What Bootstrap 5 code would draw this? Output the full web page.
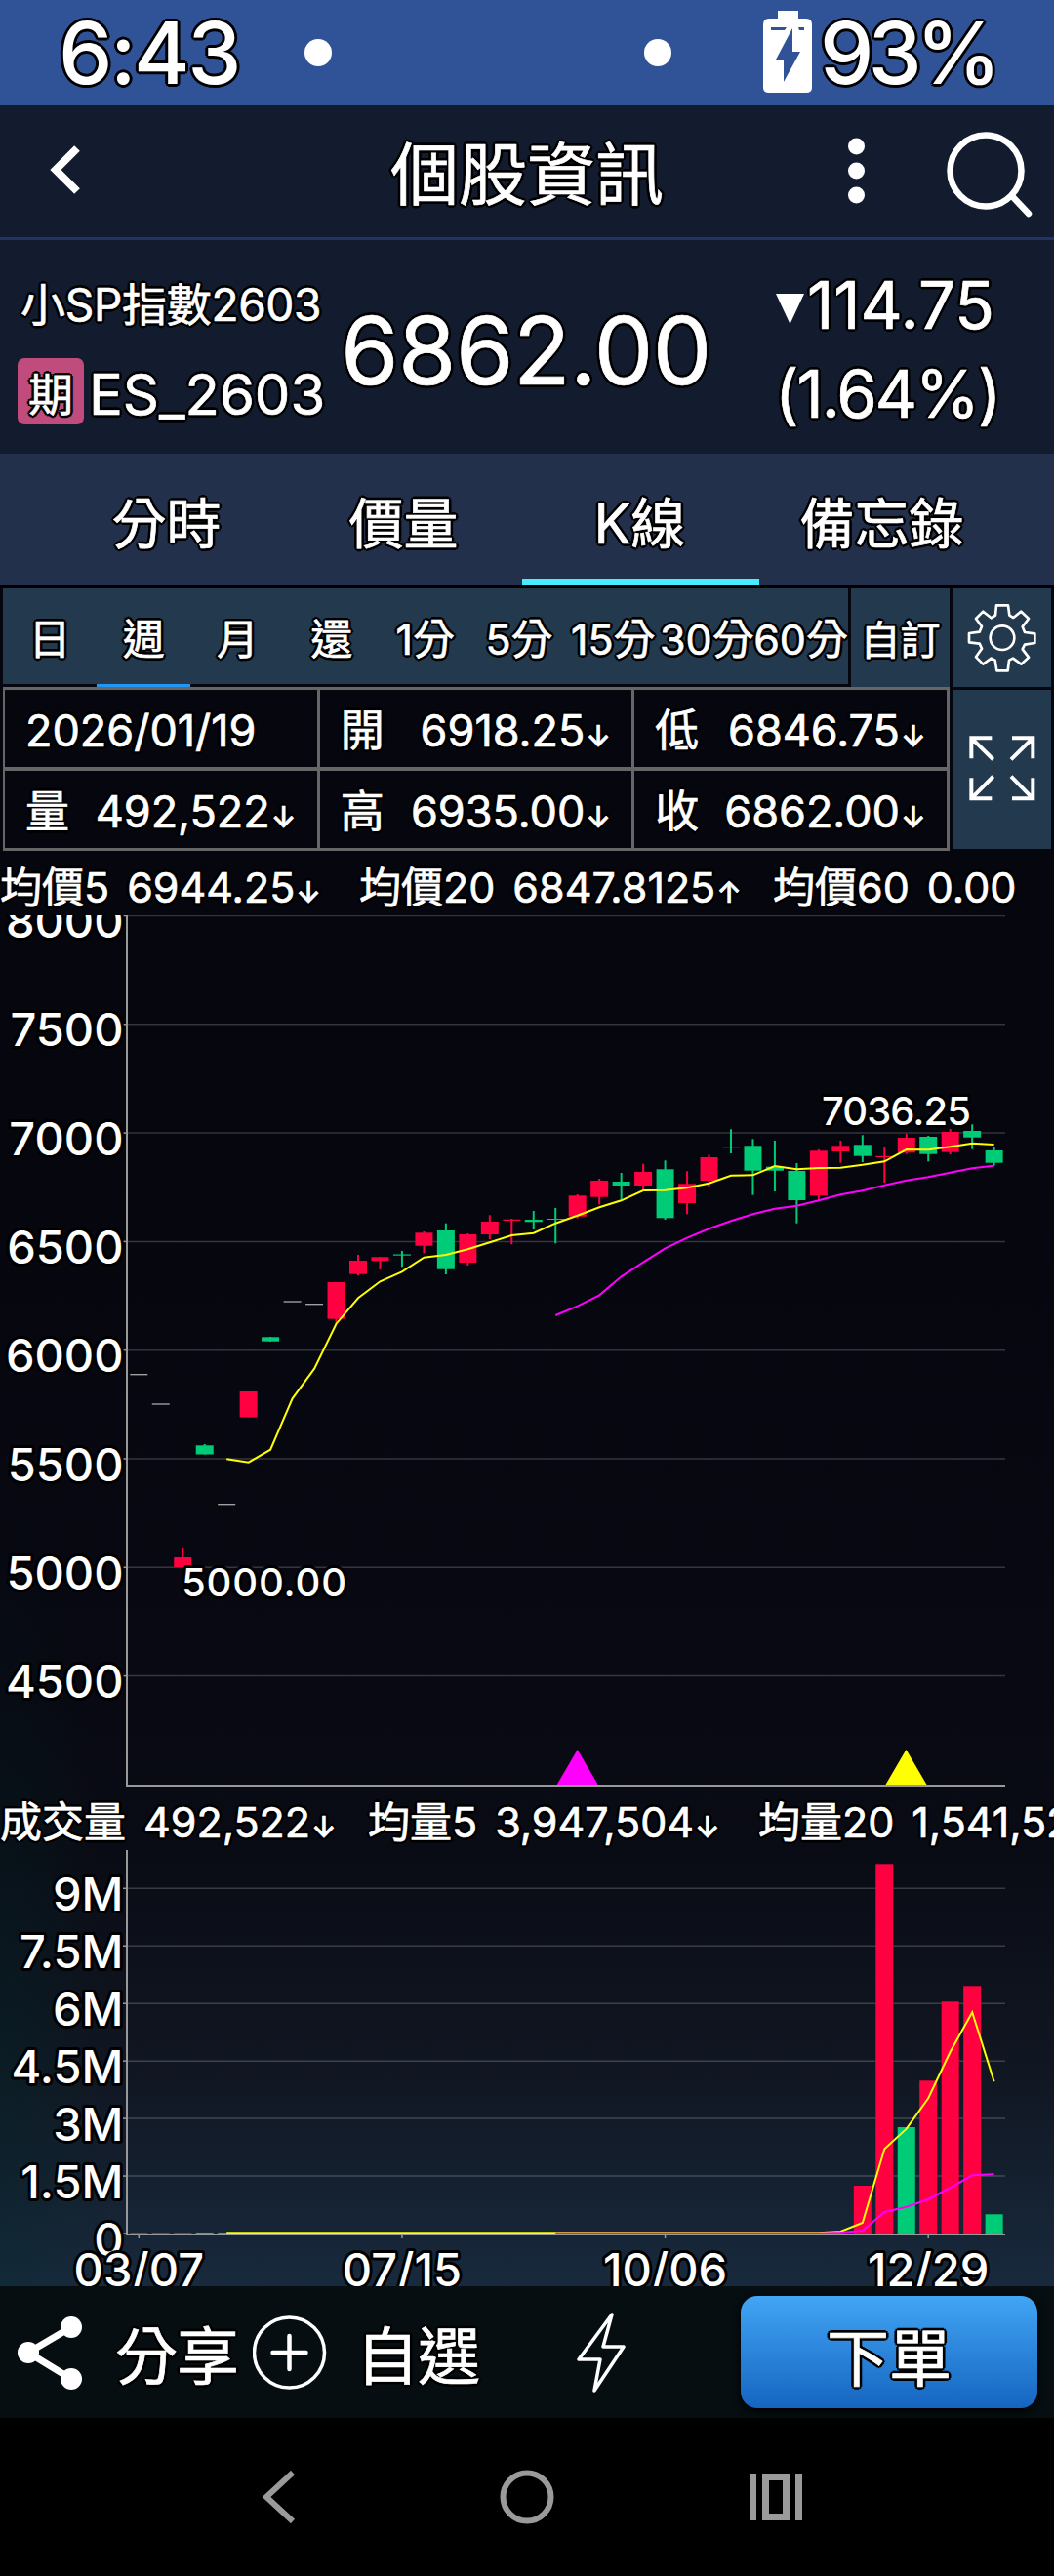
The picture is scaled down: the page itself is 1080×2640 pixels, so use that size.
<!DOCTYPE html>
<html lang="zh-Hant">
<head>
<meta charset="utf-8">
<meta name="viewport" content="width=device-width, initial-scale=1">
<title>個股資訊</title>
<link href="https://cdn.jsdelivr.net/npm/bootstrap@5.3.0/dist/css/bootstrap.min.css" rel="stylesheet">
<style>
  html, body { margin: 0; background: #000; }
  body { width: 1080px; height: 2640px; overflow: hidden; color: #fff; font-family: "Inter", "Noto Sans CJK TC", sans-serif; line-height: 1; }
  .ink { text-shadow: 3px 0 #000, -3px 0 #000, 0 3px #000, 0 -3px #000, 2px 2px #000, -2px 2px #000, 2px -2px #000, -2px -2px #000; -webkit-text-stroke: .7px #fff; white-space: nowrap; line-height: 1; }
  .ink span { display: inline-block; white-space: nowrap; }
  svg { display: block; flex: none; }
  svg text { fill: #fff; stroke: #000; stroke-width: 6px; stroke-linejoin: round; paint-order: stroke fill; font-size: 47px; font-weight: 500; -webkit-text-stroke: 0; }
  .status-bar { height: 108px; background: #305398; padding: 0 60px 0 60px; font-weight: 500; font-size: 88px; -webkit-text-stroke: 0; }
  .title-bar { height: 138px; background: #121c2e; border-bottom: 3px solid #22336a; font-size: 70px; }
  .title-bar > span { padding-top: 9px; }
  .bar-left { left: 50px; top: 40px; }
  .bar-right { left: 868px; top: 26px; }
  .quote-bar { height: 219px; background: #121c2e; }
  .kind-tag { width: 68px; height: 68px; background: #bf4c7c; border-radius: 7px; font-size: 46px; padding-top: 5px; margin-right: 5px; }
  .quote-left { width: 350px; padding: 42px 0 0 18px; }
  .quote-name { font-size: 46px; height: 79px; padding: 1px 0 0 3px; letter-spacing: -.3px; }
  .quote-code { font-size: 58px; padding-top: 6px; }
  .quote-price { font-size: 96px; width: 438px; letter-spacing: -.5px; padding-top: 6px; margin-left: -1px; }
  .quote-diff { font-size: 67px; padding-top: 4px; }
  .quote-diff svg { margin-top: 9px; }
  .quote-pct { padding-left: 7px; letter-spacing: -2px; }
  .tab-strip { height: 135px; background: #22304b; padding: 0 48px 0 49px; font-size: 56px; margin-bottom: 3px; }
  .tab-strip .nav-link { width: 243px; height: 135px; color: #fff; padding: 15px 0 0; border-bottom: 7px solid transparent; border-radius: 0; }
  .tab-strip .nav-link:last-child { width: 254px; padding-right: 3px; }
  .tab-strip .nav-link.active { border-bottom-color: #47ecff; padding-right: 2px; }
  .app-body { height: 1740px; background: radial-gradient(ellipse 110px 600px at 0 88%, rgba(0,40,42,.35), transparent), linear-gradient(#05060e 0, #05060e 35%, #080912 66%, #0a0c15 75%, #111723 88%, #182a3d 100%); }
  .tool-block { height: 269px; padding-left: 3px; gap: 3px; }
  .panel-cell { background: #23394d; }
  .periods { width: 866px; height: 98px; font-size: 43px; }
  .periods > div { width: 96.2px; height: 101px; border-bottom: 3px solid transparent; padding-top: 7px; }
  .periods > div.on { border-color: #2196f3; }
  .custom-cell { width: 101px; font-size: 41px; padding-top: 6px; }
  .side-tools { width: 101px; }
  .ohlc { width: 970px; height: 168px; font-size: 45px; border: 1px solid #666; }
  .ohlc > div { border: 2px solid #666; border-width: 2px 2px 2px 1px; width: 33.333%; height: 50%; padding: 3px 23px 0 21px; }
  .trend { font-size: 30px; font-weight: 500; width: 24px; margin-left: 1px; text-align: center; }
  .legend-row { font-size: 43px; overflow: hidden; }
  .legend-row > div { flex: none; }
  .legend-row .k { margin-right: 18px; }
  .price-legend { height: 66px; padding-top: 16px; }
  .volume-legend { height: 64px; padding-top: 14px; }
  .action-bar { height: 135px; background: #060e11; font-size: 64px; padding: 0 17px 0 18px; }
  .action-bar > span { padding-top: 8px; }
  .order-btn { width: 304px; height: 115px; border-radius: 17px; border: 0; background: linear-gradient(#42a5f5, #1565c0); box-shadow: 0 3px 8px #000; font-size: 64px; color: #fff; padding-top: 14px; }
  .sys-nav { height: 162px; background: #000; padding: 0 258px 0 268px; }
</style>
</head>
<body>
<header>
  <div class="status-bar d-flex align-items-center ink">
    <span style="width:252px;letter-spacing:-2.500px">6:43</span>
    <svg width="376" height="28"><circle cx="14" cy="14" r="14" fill="#fff"/><circle cx="362" cy="14" r="14" fill="#fff"/></svg>
    <svg class="ms-auto me-2" width="50" height="86" viewBox="0 0 50 86"><path fill="#fff" d="M15 0h21v8h8q6 0 6 6v65q0 5-6 5H6q-6 0-6-5V14q0-6 6-6h9z"/><path fill="#305398" d="M8 17h16l-2 3H8zM36 17h6v3h-5zM30 18 13 50h8v23l17-31h-8z"/></svg>
    <span style="letter-spacing:-6px">93%</span>
  </div>
  <div class="title-bar d-flex align-items-center ink position-relative justify-content-center">
    <svg class="position-absolute bar-left" width="36" height="56"><path d="M29 4 7 26l22 22" fill="none" stroke="#fff" stroke-width="8"/></svg>
    <span>個股資訊</span>
    <svg class="position-absolute bar-right" width="200" height="95"><g fill="#fff"><circle cx="9.500" cy="16" r="8.500"/><circle cx="9.500" cy="41" r="8.500"/><circle cx="9.500" cy="66" r="8.500"/></g><circle cx="142" cy="41" r="36.500" fill="none" stroke="#fff" stroke-width="6.500"/><path d="m169 67 17 18" stroke="#fff" stroke-width="6.500" stroke-linecap="round"/></svg>
  </div>
  <div class="quote-bar d-flex">
    <div class="quote-left d-flex flex-column">
      <div class="ink quote-name">小SP指數2603</div>
      <div class="d-flex align-items-center">
        <div class="kind-tag ink d-flex align-items-center justify-content-center">期</div>
        <div class="ink quote-code">ES_2603</div>
      </div>
    </div>
    <div class="ink quote-price d-flex align-items-center">6862.00</div>
    <div class="ink quote-diff d-flex flex-column justify-content-center gap-4">
      <div class="d-flex align-items-center ps-1"><svg width="36" height="34"><path d="M4 1h29L18.500 32z" fill="#fff"/></svg><span>114.75</span></div>
      <div class="quote-pct">(1.64%)</div>
    </div>
  </div>
</header>
<nav class="tab-strip nav ink flex-nowrap">
  <a class="nav-link d-flex align-items-center justify-content-center">分時</a>
  <a class="nav-link d-flex align-items-center justify-content-center">價量</a>
  <a class="nav-link active d-flex align-items-center justify-content-center">K線</a>
  <a class="nav-link d-flex align-items-center justify-content-center">備忘錄</a>
</nav>
<main class="app-body">
  <div class="tool-block d-flex">
    <div>
      <div class="d-flex" style="gap:3px;height:101px">
        <div class="periods panel-cell d-flex ink">
          <div class="d-flex align-items-center justify-content-center">日</div>
          <div class="on d-flex align-items-center justify-content-center">週</div>
          <div class="d-flex align-items-center justify-content-center">月</div>
          <div class="d-flex align-items-center justify-content-center">還</div>
          <div class="d-flex align-items-center justify-content-center">1分</div>
          <div class="d-flex align-items-center justify-content-center">5分</div>
          <div class="d-flex align-items-center justify-content-center">15分</div>
          <div class="d-flex align-items-center justify-content-center">30分</div>
          <div class="d-flex align-items-center justify-content-center">60分</div>
        </div>
        <div class="panel-cell custom-cell ink d-flex align-items-center justify-content-center">自訂</div>
      </div>
      <div class="ohlc d-flex flex-wrap ink">
        <div class="d-flex align-items-center">2026/01/19</div>
        <div class="d-flex align-items-center justify-content-between"><span>開</span><span>6918.25<span class="trend">↓</span></span></div>
        <div class="d-flex align-items-center justify-content-between"><span>低</span><span>6846.75<span class="trend">↓</span></span></div>
        <div class="d-flex align-items-center justify-content-between"><span>量</span><span>492,522<span class="trend">↓</span></span></div>
        <div class="d-flex align-items-center justify-content-between"><span>高</span><span>6935.00<span class="trend">↓</span></span></div>
        <div class="d-flex align-items-center justify-content-between"><span>收</span><span>6862.00<span class="trend">↓</span></span></div>
      </div>
    </div>
    <div class="side-tools d-flex flex-column" style="gap:3px">
      <div class="panel-cell d-flex align-items-center justify-content-center" style="height:101px">
        <svg width="74" height="74" viewBox="60 52 222 222"><g fill="none" stroke="#fff" stroke-width="8" stroke-linejoin="round"><path d="M153 62h36l4 31 12 7 24-19 23 22-19 25 7 17 31 4v29l-31 5-7 14 19 25-23 21-25-18-12 6-4 32h-34l-5-32-12-6-25 18-22-22 18-26-7-15-32-4v-28l32-4 7-17-18-24 22-22 25 20 13-8z"/><circle cx="171" cy="162" r="37"/></g></svg>
      </div>
      <div class="panel-cell d-flex justify-content-center" style="height:163px;padding-top:47px">
        <svg width="68" height="68" viewBox="68 464 204 204"><path fill="none" stroke="#fff" stroke-width="12" d="M138 471H75v63M75 471l67 66M200 471h64v63M264 471l-67 66M75 594v63h63M75 657l67-68M200 657h64v-63M264 657l-67-68"/></svg>
      </div>
    </div>
  </div>
  <div class="legend-row price-legend ink d-flex">
    <div style="width:368px"><span class="k">均價5</span><span>6944.25<span class="trend">↓</span></span></div>
    <div style="width:424px"><span class="k">均價20</span><span>6847.8125<span class="trend">↑</span></span></div>
    <div><span class="k">均價60</span><span>0.00</span></div>
  </div>
  <svg id="price" width="1080" height="894" viewBox="0 938 1080 894"></svg>
  <div class="legend-row volume-legend ink d-flex">
    <div style="width:377px"><span class="k">成交量</span><span>492,522<span class="trend">↓</span></span></div>
    <div style="width:400px"><span class="k">均量5</span><span>3,947,504<span class="trend">↓</span></span></div>
    <div><span class="k">均量20</span><span>1,541,528</span></div>
  </div>
  <svg id="volume" width="1080" height="447" viewBox="0 1896 1080 447"></svg>
</main>
<footer>
  <div class="action-bar d-flex align-items-center ink">
    <svg width="68" height="78"><path d="M55 13 11 39l44 27" fill="none" stroke="#fff" stroke-width="7"/><g fill="#fff"><circle cx="55" cy="13" r="11"/><circle cx="11" cy="39" r="11"/><circle cx="55" cy="66" r="11"/></g></svg>
    <span style="margin-left:32px;width:141px;letter-spacing:-1px">分享</span>
    <svg width="76" height="76"><circle cx="37.500" cy="38" r="36" fill="none" stroke="#fff" stroke-width="3.500"/><path d="M37.500 21v34M20.500 38h34" stroke="#fff" stroke-width="4.500" stroke-linecap="round"/></svg>
    <span style="margin-left:30px;width:226px;letter-spacing:-1px">自選</span>
    <svg width="50" height="86"><path d="M36 4 2 50h22l-6 32 30-45H27z" fill="none" stroke="#fff" stroke-width="3.500" stroke-linejoin="round"/></svg>
    <button class="order-btn ink ms-auto" type="button">下單</button>
  </div>
  <div class="sys-nav d-flex align-items-center">
    <svg width="36" height="54"><path d="M32 2 5 27l27 25" fill="none" stroke="#9a9a9a" stroke-width="6"/></svg>
    <svg style="margin-left:208px" width="56" height="56"><circle cx="28" cy="28" r="24.500" fill="none" stroke="#9a9a9a" stroke-width="6"/></svg>
    <svg class="ms-auto" width="54" height="48"><path d="M3.500 0v48M50.500 0v48" stroke="#9a9a9a" stroke-width="7"/><path d="M16.500 3.500h21v41h-21z" fill="none" stroke="#9a9a9a" stroke-width="7"/></svg>
  </div>
</footer>
<script src="https://cdn.jsdelivr.net/npm/bootstrap@5.3.0/dist/js/bootstrap.bundle.min.js"></script>
<script>
const RED = '#ff0040', GREEN = '#00cc78', GREY = '#999';
const cx = i => 142.3 + 22.47 * i;
const line = (x1, y1, x2, y2, c, w = 1.5) => `<line x1="${x1}" y1="${y1}" x2="${x2}" y2="${y2}" stroke="${c}" stroke-width="${w}"/>`;
const label = (x, y, s, a = 'end', f = '') => `<text x="${x}" y="${y}" text-anchor="${a}" ${f}>${s}</text>`;
const poly = (start, ys, c) => `<polyline fill="none" stroke="${c}" stroke-width="2" points="${ys.map((y, k) => cx(start + k).toFixed(1) + ',' + y).join(' ')}"/>`;

// weekly candles: direction, body top, body bottom, wick top, wick bottom
const candles = [
  ['n',1408.7],['n',1439],['r',1596,1606,1586,1606],['g',1481.3,1490.5,1480,1490.5],['n',1541.7],
  ['r',1426,1452.5,1426,1452.5],['g',1370.3,1374.7,1370,1375],['n',1334],['n',1336.7],['r',1314,1351.7,1314,1356.7],
  ['r',1292,1305.7,1286,1307.3],['r',1288.3,1292.3,1288,1301],['g',1285.5,1286.7,1282,1298.3],['r',1263.3,1276.7,1262,1284.3],
  ['g',1261,1300.7,1253.7,1306],['r',1265,1294,1264,1297],['r',1252,1265,1245.3,1270],['r',1249.7,1251,1249,1275.3],
  ['g',1250,1252.3,1241,1260],['g',1249,1250,1238,1274.3],['r',1225.3,1246.7,1224,1248.7],['r',1210,1226.7,1208,1234.3],
  ['g',1211,1215,1202,1229.3],['r',1201,1215,1192.7,1219.3],['g',1198.3,1248.3,1189.3,1250],['r',1213.3,1233,1200.3,1244.3],
  ['r',1186,1210,1183.3,1216.7],['g',1175,1176.2,1157.3,1182],['g',1174.3,1199.7,1167.3,1224.7],['g',1195.7,1199.7,1169,1221],
  ['g',1200,1230,1192,1253.7],['r',1179.3,1225.3,1178,1230],['r',1174.3,1180,1169,1191.7],['g',1173.3,1184.7,1163.3,1191],
  ['r',1184.8,1186,1176,1212],['r',1166,1181.3,1162,1182.7],['g',1165,1182.7,1164,1190.3],['r',1160,1180.7,1157,1183],
  ['g',1159,1165.7,1152.3,1177.7],['g',1179,1191.7,1175.3,1194.7]];
const ma5 = [1495.3,1498.7,1485.7,1433.3,1402.7,1356.7,1330.3,1313.3,1303.3,1288.7,1286,1280.3,1273.3,1266,1263.7,1253.7,1245.7,1237.3,1230.3,1220,1219.7,1217.3,1212.7,1204.7,1204.3,1195,1198.3,1197,1196.7,1193.7,1190.3,1178,1178.3,1175.3,1171.7,1173];
const ma20 = [1348,1338.7,1327.3,1308.3,1293.7,1279.3,1268.7,1259.3,1251.3,1244.3,1238.7,1235.7,1230.3,1224.3,1220.3,1214.7,1209.7,1206.3,1201.7,1197.3,1194.7];

let p = '';
for (let k = 0; k < 8; k++) {
  const y = 938.5 + 111.3 * k;
  p += line(130, y, 1030, y, 'rgba(255,255,255,.19)') + line(126, y, 130, y, GREY) + label(126.5, y + 22.5, 8000 - 500 * k);
}
p += line(130, 938, 130, 1831, GREY, 2) + line(129, 1830, 1030, 1830, GREY, 2);
p += '<path fill="#f0f" d="M591.700 1793l21 36h-42z"/><path fill="#ff0" d="M928.500 1793l21 36h-42z"/>';
candles.forEach(([d, t, b, wt, wb], i) => {
  const x = cx(i), c = d === 'r' ? RED : GREEN;
  if (d === 'n') p += line(x - 9, t, x + 9, t, '#aaa', 1.3);
  else p += line(x, wt, x, wb, c, 2) + `<rect x="${x - 9}" y="${t}" width="18" height="${b - t}" fill="${c}"/>`;
});
p += poly(4, ma5, '#ff0') + poly(19, ma20, '#f0f');
p += label(842, 1152.5, '7036.25', 'start', 'style="font-size:40px" textLength="153"') + label(186, 1635.5, '5000.00', 'start', 'style="font-size:40px" textLength="169"');
document.getElementById('price').innerHTML = p;

const flat = (n, y) => Array(n).fill(y);
let v = '';
['9M','7.5M','6M','4.5M','3M','1.5M','0'].forEach((s, k) => {
  const y = 1935.3 + 58.95 * k;
  if (k < 6) v += line(130, y, 1030, y, 'rgba(255,255,255,.19)');
  v += line(126, y, 130, y, GREY) + label(126.5, y + 23, s);
});
v += line(130, 1896, 130, 2291, GREY, 2) + line(129, 2290, 1030, 2290, GREY, 2);
for (let i = 0; i < 5; i++) v += line(cx(i) - 9, 2288.7, cx(i) + 9, 2288.7, i < 3 ? RED : GREEN, 1.5);
[[33,2240,RED],[34,1910.3,RED],[35,2180,GREEN],[36,2132.3,RED],[37,2051.3,RED],[38,2035.3,RED],[39,2269.3,GREEN]]
  .forEach(([i, t, c]) => v += `<rect x="${cx(i) - 9}" y="${t}" width="18" height="${2289 - t}" fill="${c}"/>`);
v += poly(4, [...flat(28, 2288.3), 2287, 2278, 2202.3, 2181.7, 2150.3, 2102.7, 2062.3, 2133.3], '#ff0');
v += poly(19, [...flat(13, 2288.7), 2288, 2286, 2267, 2261.7, 2254, 2242, 2229.3, 2228.3], '#f0f');
[[0,'03/07'],[12,'07/15'],[24,'10/06'],[36,'12/29']].forEach(([i, s]) => v += line(cx(i), 2290, cx(i), 2294, GREY) + label(cx(i), 2343, s, 'middle'));
document.getElementById('volume').innerHTML = v;
</script>
</body>
</html>
